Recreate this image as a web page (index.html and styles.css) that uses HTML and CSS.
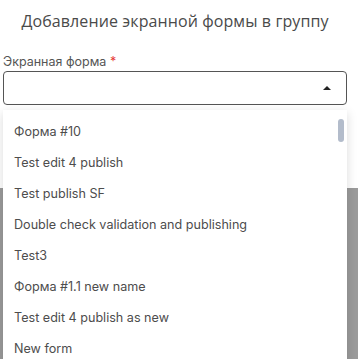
FILE: index.html
```html
<!DOCTYPE html>
<html lang="ru">
<head>
    <meta charset="UTF-8">
    <meta name="viewport" content="width=device-width, initial-scale=1.0">
    <title>Добавление экранной формы в группу</title>
    <link rel="stylesheet" href="styles.css">
</head>
<body>

<div class="modal">
    <h2 class="modal-title">Добавление экранной формы в группу</h2>

    <div class="field">
        <label class="field-label">Экранная форма <span class="req">*</span></label>
        <div class="select">
            <span class="select-arrow"></span>
        </div>
    </div>
</div>

<ul class="menu">
    <li>Форма #10</li>
    <li>Test edit 4 publish</li>
    <li>Test publish SF</li>
    <li>Double check validation and publishing</li>
    <li>Test3</li>
    <li>Форма #1.1 new name</li>
    <li>Test edit 4 publish as new</li>
    <li>New form</li>
</ul>
<div class="menu-thumb"></div>

</body>
</html>
```

FILE: styles.css
```css
body { margin: 0; background: #9b9b9b; font-family: Inter, "Noto Sans", sans-serif; height: 359px; overflow: hidden; position: relative; }
.modal { background: #fff; height: 188px; padding: 0 11px 0 3px; }
.modal-title { margin: 0; padding-top: 10px; font-family: "Open Sans", sans-serif; font-weight: 400; font-size: 16px; letter-spacing: 0.1px; line-height: 22px; color: #4a4a4a; text-align: center; }
.field { margin-top: 22px; }
.field-label { display: block; font-size: 12.5px; line-height: 16px; color: #555; margin-bottom: 1px; }
.req { color: #e53935; }
.select { height: 32px; border: 1px solid #555; border-radius: 4px; display: flex; align-items: center; justify-content: flex-end; padding-right: 15px; }
.select-arrow { width: 0; height: 0; border-left: 4px solid transparent; border-right: 4px solid transparent; border-bottom: 4px solid #222; }
.menu { position: absolute; top: 110px; left: 3px; width: 344px; margin: 0; padding: 6px 0 0; list-style: none; background: #fff; box-shadow: 0 3px 10px rgba(0,0,0,.15); height: 260px; }
.menu li { height: 31px; line-height: 31px; padding-left: 11px; font-size: 12.6px; color: #4d4d4d; }
.menu-thumb { position: absolute; top: 119px; left: 338px; width: 6px; height: 23px; border-radius: 3px; background: #b3bccb; }
```
